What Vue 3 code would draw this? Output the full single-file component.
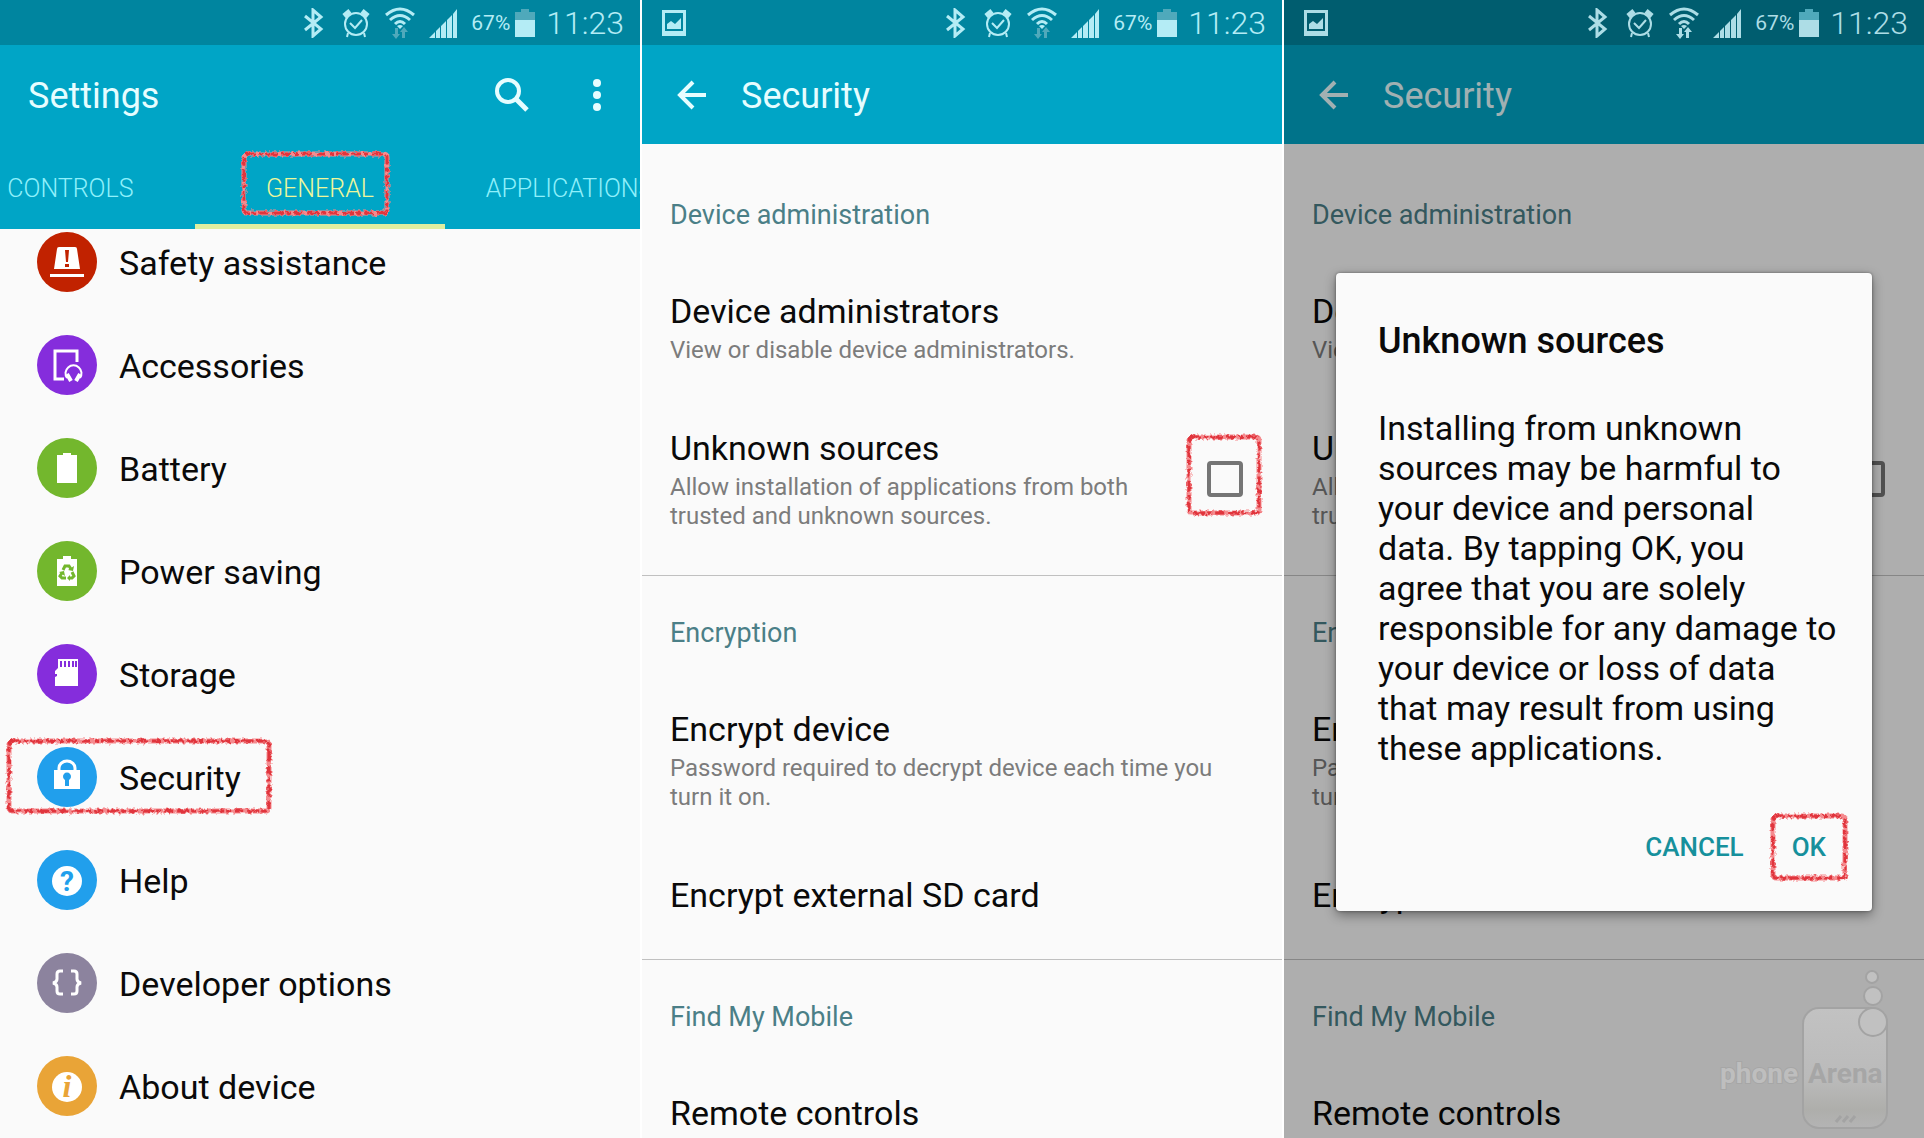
<template>
  <div class="screens">
    <section class="screen"
             v-for="screen of screens"
             :key="screen.id"
             :class="{ dimmed: screen.dialog }">
      <header class="status-bar">
        <svg v-if="screen.notification" class="notification" width="24" height="28" viewBox="0 0 24 28">
          <path fill="currentColor" fill-rule="evenodd" d="M0 1h24v26H0z M3 4v18h18V4z" />
          <path fill="currentColor" d="M5 20v-5l4-3 4 3 6-6v11z" />
        </svg>
        <div class="status-icons">
          <svg width="20" height="30" viewBox="0 0 20 30">
            <path fill="none" stroke="currentColor" stroke-width="3"
                  d="M1 8l16 13-8 7V2l8 7L1 22" />
          </svg>
          <svg class="alarm" width="28" height="30" viewBox="0 0 28 30">
            <g fill="none" stroke="currentColor">
              <circle cx="14" cy="16" r="11" stroke-width="2" />
              <path stroke-width="2" d="M8 15l5 5 7-8M6 25l-1 4M22 25l1 4" />
              <path stroke-width="5" d="M2 8l6-5M26 8l-6-5" />
            </g>
          </svg>
          <svg class="wifi" width="30" height="32" viewBox="0 0 30 32">
            <g fill="none" stroke="currentColor" stroke-width="3">
              <path d="M1 8q14-12 28 0" />
              <path d="M5 13q10-9 20 0" />
              <path d="M10 17q5-5 10 0" />
            </g>
            <path fill="currentColor" d="M12 19q3-2 6 0l-3 3z" />
            <path class="traffic" d="M10 21h3v6h2l-4 5-4-5h3z M17 31h3v-6h3l-4-5-4 5h2z" />
          </svg>
          <svg class="signal" width="28" height="30" viewBox="0 0 28 30">
            <path fill="currentColor"
                  d="M0 30l6-6v6z M7 23l4-4v11H7z M12 18l5-5v17h-5z M18 12l5-5v23h-5z M24 6l4-5v29h-4z" />
          </svg>
          <span class="percent">67%</span>
          <svg class="battery" width="20" height="28" viewBox="0 0 20 28">
            <path class="battery-empty" d="M6 0h8v3h6v8H0V3h6z" />
            <path fill="currentColor" d="M0 11h20v17H0z" />
          </svg>
          <time class="clock">11:23</time>
        </div>
      </header>

      <main class="content" v-if="screen.id === 'settings'">
        <div class="settings-header">
          <div class="app-bar">
            <h1>Settings</h1>
            <button class="icon-button search" aria-label="Search">
              <svg width="36" height="36" viewBox="0 0 36 36" fill="none" stroke="currentColor">
                <circle cx="14" cy="14" r="11" stroke-width="4" />
                <path stroke-width="5" d="M22 22l11 11" />
              </svg>
            </button>
            <button class="icon-button" aria-label="More options">
              <svg width="10" height="36" viewBox="0 0 10 36" fill="currentColor">
                <circle cx="5" cy="6" r="4" />
                <circle cx="5" cy="18" r="4" />
                <circle cx="5" cy="30" r="4" />
              </svg>
            </button>
          </div>
          <nav class="tabs">
            <button class="tab"
                    v-for="tab of tabs"
                    :key="tab"
                    :class="{ active: tab === activeTab }"
                    @click="activeTab = tab">
              {{ tab }}
              <svg v-if="tab === 'GENERAL'" class="marker marker-tab">
                <rect class="marker-base" /><rect class="marker-chalk" />
              </svg>
            </button>
          </nav>
        </div>

        <ul class="settings-list">
          <li v-for="item of settings" :key="item.name">
            <a href="#" class="settings-row">
              <svg class="row-icon" width="60" height="60" viewBox="0 0 60 60" :color="item.color">
                <circle cx="30" cy="30" r="30" fill="currentColor" />
                <g v-if="item.icon === 'siren'">
                  <path fill="#fff" d="M22 15h16q2 0 2 2l3 20H17l3-20q0-2 2-2z M13 42h34v3H13z" />
                  <path fill="currentColor" d="M28 18h4l-1 12h-2z M28 32h4v3h-4z" />
                </g>
                <g v-else-if="item.icon === 'accessories'" fill="none" stroke="#fff">
                  <path stroke-width="3" d="M27 44h-9V16h22v11" />
                  <path stroke-width="2" d="M30 43a8 8 0 1 1 13 0" />
                  <path stroke-width="4" d="M30 39l4 7M43 39l-4 7" />
                </g>
                <path v-else-if="item.icon === 'battery'" fill="#fff" d="M20 17h6v-2h8v2h6v28H20z" />
                <g v-else-if="item.icon === 'saving'">
                  <path fill="#fff" d="M20 18h6v-3h8v3h6v27H20z" />
                  <g fill="none" stroke="currentColor" stroke-width="3">
                    <path d="M26 29l2-4h4l2 3" />
                    <path d="M35 31l2 4-2 2h-3" />
                    <path d="M29 37h-4l-2-2 2-3" />
                  </g>
                  <path fill="currentColor" d="M31 29l5 1 1-5z M33 34v6l-3-3z M22 31l5-1 1 5z" />
                </g>
                <g v-else-if="item.icon === 'storage'">
                  <path fill="#fff" d="M21 15h20v27H18v-9l2-1v-2h-2v-3l3-3z" />
                  <path stroke="currentColor" stroke-width="2" d="M24 17v6M28 17v6M32 17v6M36 17v6M39 17v6" />
                </g>
                <g v-else-if="item.icon === 'lock'">
                  <path fill="none" stroke="#fff" stroke-width="3" d="M22 24v-3a8 7 0 0 1 16 0v3" />
                  <path fill="#fff" d="M17 23h26v19H17z" />
                  <path fill="currentColor" d="M28 33a4 4 0 1 1 4 0v6h-4z" />
                </g>
                <g v-else-if="item.icon === 'braces'" fill="none" stroke="#fff" stroke-width="3">
                  <path d="M26 18h-3q-3 0-3 3v5q0 3-4 4 4 1 4 4v4q0 3 3 3h3" />
                  <path d="M34 18h3q3 0 3 3v5q0 3 4 4-4 1-4 4v4q0 3-3 3h-3" />
                </g>
                <g v-else>
                  <circle cx="30" cy="31" r="15" fill="#fff" />
                  <text class="glyph" :class="item.icon" x="30" y="41" text-anchor="middle" fill="currentColor">{{ item.glyph }}</text>
                </g>
              </svg>
              <span class="row-name">{{ item.name }}</span>
            </a>
            <svg v-if="item.marked" class="marker marker-row">
              <rect class="marker-base" /><rect class="marker-chalk" />
            </svg>
          </li>
        </ul>
      </main>

      <main class="content" v-else>
        <div class="app-bar">
          <button class="icon-button back" aria-label="Back">
            <svg width="30" height="30" viewBox="0 0 30 30" fill="none" stroke="currentColor" stroke-width="4">
              <path d="M29 15H3M16 2L3 15l13 13" />
            </svg>
          </button>
          <h1>Security</h1>
        </div>
        <div class="groups">
          <section class="group" v-for="group of groups" :key="group.title">
            <h2>{{ group.title }}</h2>
            <div class="preference" v-for="pref of group.items" :key="pref.title">
              <label class="preference-text"
                     :class="{ single: !pref.summary }"
                     :for="`${screen.id}-${pref.id}`">
                <span class="preference-title">{{ pref.title }}</span>
                <span class="preference-summary" v-if="pref.summary">{{ pref.summary }}</span>
              </label>
              <div class="check" v-if="pref.checkbox">
                <input type="checkbox" :id="`${screen.id}-${pref.id}`">
                <svg v-if="!screen.dialog" class="marker marker-check">
                  <rect class="marker-base" /><rect class="marker-chalk" />
                </svg>
              </div>
            </div>
          </section>
        </div>

        <div class="scrim" v-if="screen.dialog">
          <div class="dialog" role="dialog" aria-labelledby="dialog-title">
            <h2 id="dialog-title">Unknown sources</h2>
            <p>{{ warning }}</p>
            <div class="dialog-actions">
              <button>CANCEL</button>
              <button>
                OK
                <svg class="marker marker-ok">
                  <rect class="marker-base" /><rect class="marker-chalk" />
                </svg>
              </button>
            </div>
          </div>
        </div>

        <svg v-if="screen.dialog" class="watermark" width="172" height="164" viewBox="0 0 172 164">
          <defs>
            <linearGradient id="phone-fill" x1="0" y1="0" x2="0" y2="1">
              <stop offset="0" stop-color="#c2c2c2" />
              <stop offset="0.6" stop-color="#bababa" />
              <stop offset="0.85" stop-color="#aeaeab" />
              <stop offset="1" stop-color="#b4b4b4" />
            </linearGradient>
          </defs>
          <g stroke="#a3a3a3" stroke-width="2">
            <rect x="86" y="38" width="84" height="120" rx="16" fill="url(#phone-fill)" />
            <g fill="#c1c1c1">
              <circle cx="156" cy="52" r="14" />
              <circle cx="156" cy="26" r="9" />
              <circle cx="155" cy="7" r="6" />
            </g>
            <path stroke-width="3" d="M119 152l5-6M126 152l5-6M133 152l5-6" />
          </g>
          <text class="watermark-text watermark-phone" x="3" y="113">phone</text>
          <text class="watermark-text" x="91" y="113" fill="#a6a6a6">Arena</text>
        </svg>
      </main>
    </section>

    <svg class="filters" width="0" height="0">
      <filter id="chalk" x="-10%" y="-10%" width="120%" height="120%">
        <feTurbulence type="fractalNoise" baseFrequency="0.3" numOctaves="2" seed="4" />
        <feDisplacementMap in="SourceGraphic" scale="5" />
      </filter>
    </svg>
  </div>
</template>

<script setup>
  import { ref } from 'vue';

  const screens = [
    { id: "settings" },
    { id: "security", notification: true },
    { id: "confirm", notification: true, dialog: true },
  ];

  const tabs = ["CONTROLS", "GENERAL", "APPLICATIONS"];
  const activeTab = ref("GENERAL");

  const settings = [
    { name: "Safety assistance", icon: "siren", color: "#c12200" },
    { name: "Accessories", icon: "accessories", color: "#852ddc" },
    { name: "Battery", icon: "battery", color: "#73b72d" },
    { name: "Power saving", icon: "saving", color: "#73b72d" },
    { name: "Storage", icon: "storage", color: "#852ddc" },
    { name: "Security", icon: "lock", color: "#219fec", marked: true },
    { name: "Help", icon: "help", color: "#219fec", glyph: "?" },
    { name: "Developer options", icon: "braces", color: "#8c839e" },
    { name: "About device", icon: "about", color: "#e9a437", glyph: "i" },
  ];

  const groups = [
    {
      title: "Device administration",
      items: [
        { id: "admins", title: "Device administrators", summary: "View or disable device administrators." },
        {
          id: "unknown",
          title: "Unknown sources",
          summary: "Allow installation of applications from both trusted and unknown sources.",
          checkbox: true,
        },
      ],
    },
    {
      title: "Encryption",
      items: [
        { id: "encrypt", title: "Encrypt device", summary: "Password required to decrypt device each time you turn it on." },
        { id: "sd", title: "Encrypt external SD card" },
      ],
    },
    {
      title: "Find My Mobile",
      items: [{ id: "remote", title: "Remote controls" }],
    },
  ];

  const warning = [
    "Installing from unknown",
    "sources may be harmful to",
    "your device and personal",
    "data. By tapping OK, you",
    "agree that you are solely",
    "responsible for any damage to",
    "your device or loss of data",
    "that may result from using",
    "these applications.",
  ].join("\n");
</script>

<style>
body {
  background: #fff;
}
</style>

<style scoped>
.screens {
  display: grid;
  grid-template-columns: repeat(3, minmax(0, 1fr));
  gap: 2px;
  height: 100vh;
  overflow: hidden;
  font-family: Roboto, "Noto Sans", sans-serif;
  color: #0a0a0a;
}

.screen {
  display: flex;
  flex-direction: column;
  min-height: 0;
  background: #fafafa;
}

h1, h2, p, ul {
  margin: 0;
  padding: 0;
  font-weight: 400;
}

button {
  padding: 0;
  border: none;
  background: none;
  font-family: inherit;
  color: inherit;
}

.status-bar {
  display: flex;
  align-items: center;
  flex: none;
  height: 45px;
  padding: 0 16px 0 20px;
  background: #00859f;
  color: #b4ecf5;
}

.dimmed .status-bar {
  background: #005d6f;
  color: #addde6;
}

.status-icons {
  display: flex;
  align-items: center;
  margin-left: auto;
}

.alarm {
  margin-left: 18px;
}

.wifi {
  margin-left: 15px;
}

.traffic {
  fill: #4fa9bb;
}

.dimmed .traffic {
  fill: currentColor;
}

.signal {
  margin-left: 14px;
}

.percent {
  margin-left: 14px;
  font-size: 21px;
}

.battery {
  margin-left: 5px;
}

.battery-empty {
  fill: #4fa9bb;
}

.clock {
  margin-left: 11px;
  font-size: 32px;
  font-weight: 300;
}

.content {
  position: relative;
  flex: 1;
  min-height: 0;
  overflow: hidden;
}

.app-bar {
  display: flex;
  align-items: center;
  height: 99px;
  padding: 0 38px 0 28px;
  background: #00a5c6;
  color: #e6fdff;
}

.app-bar h1 {
  padding-top: 2px;
  font-size: 36px;
}

.icon-button {
  display: flex;
}

.search {
  margin-left: auto;
  margin-right: 62px;
}

.back {
  margin: 0 34px 0 7px;
}

.settings-header {
  position: relative;
  z-index: 1;
  background: #00a5c6;
}

.tabs {
  display: flex;
  justify-content: center;
  height: 85px;
  overflow: hidden;
}

.tab {
  position: relative;
  flex: 0 0 39%;
  padding-top: 8px;
  border-bottom: 5px solid transparent;
  font-size: 25px;
  font-weight: 300;
  color: #8ff0fb;
}

.tab.active {
  border-bottom-color: #dfeea0;
  color: #eef79b;
}

.settings-list {
  margin-top: -19px;
  list-style: none;
}

.settings-list li {
  position: relative;
}

.settings-row {
  display: flex;
  align-items: center;
  gap: 22px;
  height: 103px;
  padding-left: 37px;
  font-size: 34px;
  color: inherit;
  text-decoration: none;
}

.row-name {
  padding-top: 2px;
}

.glyph {
  font-size: 28px;
  font-weight: 700;
}

.glyph.about {
  font-family: "Liberation Serif", serif;
  font-size: 32px;
  font-style: italic;
}

.groups {
  padding-top: 14px;
}

.group {
  padding-bottom: 15px;
}

.group + .group {
  border-top: 1px solid #c0c0c0;
}

.group h2 {
  padding: 42px 28px 27px;
  font-size: 27px;
  line-height: 30px;
  color: #4b7f87;
}

.preference {
  display: flex;
  align-items: center;
  justify-content: space-between;
  padding: 0 39px 0 28px;
}

.preference-text {
  display: flex;
  flex-direction: column;
  padding: 29px 0;
}

.preference-text.single {
  padding-bottom: 24px;
}

.preference-title {
  font-size: 34px;
  line-height: 50px;
}

.preference-summary {
  font-size: 24px;
  line-height: 29px;
  color: #7c7c7c;
}

.check {
  position: relative;
  display: flex;
  margin: 4px 0 0 40px;
}

.check input {
  appearance: none;
  width: 36px;
  height: 36px;
  margin: 0;
  border: 4px solid #757575;
  border-radius: 4px;
}

.scrim {
  position: absolute;
  inset: 0;
  display: flex;
  align-items: center;
  padding: 0 52px;
  background: rgba(0, 0, 0, 0.3);
}

.dialog {
  flex: 1;
  padding: 44px 24px 26px 42px;
  border-radius: 4px;
  background: #fafafa;
  box-shadow: 0 4px 12px rgba(0, 0, 0, 0.4), 0 0 3px rgba(0, 0, 0, 0.4);
}

.dialog h2 {
  font-size: 36px;
  font-weight: 500;
  line-height: 48px;
}

.dialog p {
  padding: 43px 0 41px;
  font-size: 34px;
  line-height: 40px;
  white-space: pre-line;
}

.dialog-actions {
  display: flex;
  justify-content: flex-end;
  gap: 4px;
}

.dialog-actions button {
  position: relative;
  padding: 0 22px;
  font-size: 26px;
  font-weight: 500;
  line-height: 76px;
  color: #16909c;
}

.watermark {
  position: absolute;
  right: 35px;
  bottom: 4px;
}

.watermark-text {
  font-size: 28px;
  font-weight: 700;
}

.watermark-phone {
  fill: #bebebe;
  stroke: #a6a6a6;
  stroke-width: 2px;
  paint-order: stroke;
}

/* Hand-drawn red boxes round the controls to tap */
.marker {
  position: absolute;
  overflow: visible;
  pointer-events: none;
  filter: url(#chalk);
}

.marker rect {
  x: 3px;
  y: 3px;
  width: calc(100% - 6px);
  height: calc(100% - 6px);
  rx: 3px;
  fill: none;
}

.marker-base {
  stroke: #f58b8f;
  stroke-width: 5px;
}

.marker-chalk {
  stroke: #e0343c;
  stroke-width: 3px;
  stroke-dasharray: 9 3 5 2 12 4;
}

.marker-tab {
  top: 7px;
  left: 46px;
  width: 149px;
  height: 65px;
}

.marker-row {
  top: 13px;
  left: 6px;
  width: 266px;
  height: 76px;
}

.marker-check {
  top: -27px;
  left: -21px;
  width: 76px;
  height: 82px;
}

.marker-ok {
  top: 4px;
  left: 0;
  width: 78px;
  height: 68px;
}

.filters {
  position: absolute;
}
</style>
